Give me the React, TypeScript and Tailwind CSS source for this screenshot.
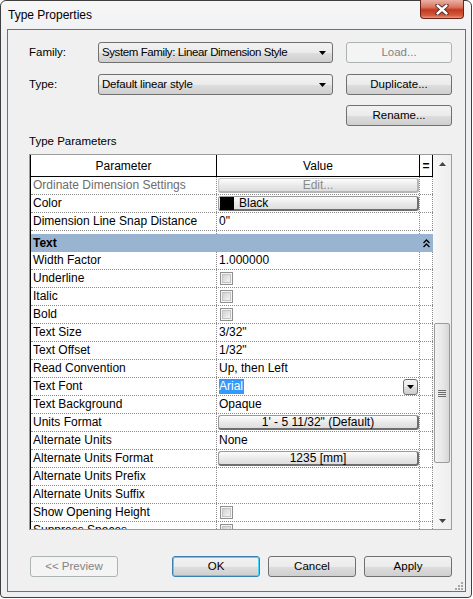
import React from "react";

const btnFace =
  "bg-[linear-gradient(#f2f2f2_0%,#ebebeb_50%,#dddddd_51%,#cfcfcf_100%)] border border-[#707070] rounded-[3px]";
const cellBtn =
  "h-[15px] w-[201px] ml-[1px] mt-[1px] rounded-[3px] border border-[#9a9a9a] border-b-2 border-r-2 border-b-[#6f6f6f] border-r-[#6f6f6f] bg-[linear-gradient(#fdfdfd,#e9e9e9_55%,#dedede)] flex items-center justify-center leading-none";
const dot = "border-dotted border-[#8a8a8a]";

function ComboArrow() {
  return (
    <svg width="7" height="4" viewBox="0 0 7 4">
      <path d="M0 0h7L3.5 4z" fill="#000" />
    </svg>
  );
}

function Checkbox() {
  return (
    <span className="block w-[13px] h-[13px] ml-[3px] mt-[2px] border border-[#8e8f8f] bg-[#f4f4f4] p-[1px]">
      <span className="block w-full h-full border border-[#c4c4c4] bg-[linear-gradient(135deg,#d2d2d2,#f5f5f5)]" />
    </span>
  );
}

function Row({
  label,
  children,
  dim,
}: {
  label: string;
  children?: React.ReactNode;
  dim?: boolean;
}) {
  return (
    <div className={`flex h-[18px] shrink-0 border-b ${dot}`}>
      <div
        className={`w-[186px] shrink-0 border-r ${dot} pl-[2px] leading-[17px] whitespace-nowrap overflow-hidden ${
          dim ? "text-[#6d6d6d]" : "text-black"
        }`}
      >
        {label}
      </div>
      <div className={`w-[203px] shrink-0 border-r ${dot} leading-[17px]`}>{children}</div>
      <div className={`w-[13px] shrink-0 border-r ${dot}`} />
    </div>
  );
}

function Val({ children }: { children: React.ReactNode }) {
  return <span className="pl-[2px] whitespace-nowrap">{children}</span>;
}

function DialogButton({
  label,
  disabled,
  primary,
  className = "",
}: {
  label: string;
  disabled?: boolean;
  primary?: boolean;
  className?: string;
}) {
  const look = disabled
    ? "border border-[#adb2b5] rounded-[3px] bg-[#f4f4f4] text-[#838383]"
    : primary
    ? "border border-[#3c7fb1] rounded-[3px] bg-[linear-gradient(#f2f2f2_0%,#ebebeb_50%,#dddddd_51%,#cfcfcf_100%)] shadow-[inset_0_0_0_1px_#48d7fb] text-black"
    : `${btnFace} text-black`;
  return (
    <div className={`h-[21px] flex items-center justify-center ${look} ${className}`}>{label}</div>
  );
}

export default function App() {
  return (
    <div className="w-[473px] h-[599px] bg-white font-['Liberation_Sans',Arial,sans-serif] text-[12px] text-black">
      <div className="w-[472px] h-[598px] border border-[#3f3f3f] rounded-t-[6px] rounded-b-[4px] bg-[linear-gradient(#f7f7f8,#eeeff1_40px,#eeeff1)] flex flex-col pl-[6px] pr-[5px] pb-[5px]">
        {/* Title bar */}
        <div className="h-[28px] shrink-0 flex items-start justify-between">
          <div className="pl-[1px] pt-[7px] leading-[14px] text-[12px]">Type Properties</div>
          <div className="w-[44px] h-[19px] -mt-px mr-[2px] border border-t-0 border-[#6b2417] rounded-b-[4px] bg-[linear-gradient(#eab1a4,#d9755f_40%,#c2391f_55%,#d3593d_85%,#e59a80)] flex items-center justify-center">
            <svg width="14" height="11" viewBox="0 0 14 11">
              <path d="M2.5 1.5l9 8M11.5 1.5l-9 8" stroke="#4a2019" strokeWidth="4.2" strokeLinecap="round" />
              <path d="M2.5 1.5l9 8M11.5 1.5l-9 8" stroke="#fff" strokeWidth="2.4" strokeLinecap="round" />
            </svg>
          </div>
        </div>

        {/* Client area */}
        <div className="flex-1 border border-[#707070] bg-[#f0f0f0] flex flex-col relative">
          <div className="flex items-center mt-[12px] pl-[21px] text-[11.5px]">
            <span className="w-[69px]">Family:</span>
            <div className={`w-[235px] h-[21px] ${btnFace} flex items-center justify-between pl-[3px] pr-[6px]`}>
              <span className="tracking-[-0.4px]">System Family: Linear Dimension Style</span>
              <ComboArrow />
            </div>
            <DialogButton label="Load..." disabled className="w-[106px] ml-[13px]" />
          </div>
          <div className="flex items-center mt-[11px] pl-[21px] text-[11.5px]">
            <span className="w-[69px]">Type:</span>
            <div className={`w-[235px] h-[21px] ${btnFace} flex items-center justify-between pl-[3px] pr-[6px]`}>
              <span className="tracking-[-0.2px]">Default linear style</span>
              <ComboArrow />
            </div>
            <DialogButton label="Duplicate..." className="w-[106px] ml-[13px]" />
          </div>
          <div className="flex mt-[10px] pl-[338px] text-[11.5px]">
            <DialogButton label="Rename..." className="w-[106px]" />
          </div>

          <div className="mt-[8px] pl-[21px] leading-[14px] text-[11.5px]">Type Parameters</div>

          {/* Parameter grid */}
          <div className="mt-[6px] ml-[21px] w-[423px] h-[376px] border border-[#9c9c9c] bg-white flex overflow-hidden">
            <div className="w-[403px] shrink-0 border-l border-black flex flex-col overflow-hidden">
              <div className="h-[22px] shrink-0 flex border-b border-black">
                <div className="w-[186px] border-r border-black flex items-center justify-center">Parameter</div>
                <div className="w-[203px] border-r border-black flex items-center justify-center">Value</div>
                <div className="w-[13px] border-r border-black flex items-center justify-center font-bold leading-none">=</div>
              </div>
              <Row label="Ordinate Dimension Settings" dim>
                <div className={`${cellBtn} border-[#c9c9c9] border-b-[#b5b5b5] border-r-[#b5b5b5] bg-[#f5f5f5] text-[#8a8a8a]`}>
                  Edit...
                </div>
              </Row>
              <Row label="Color">
                <div className={`${cellBtn} justify-start`}>
                  <span className="w-[14px] h-[13px] bg-black ml-[1px]" />
                  <span className="ml-[5px]">Black</span>
                </div>
              </Row>
              <Row label="Dimension Line Snap Distance">
                <Val>0"</Val>
              </Row>
              <div className="flex h-[3px] shrink-0">
                <div className={`w-[186px] border-r ${dot}`} />
                <div className={`w-[203px] border-r ${dot}`} />
              </div>
              <div className="h-[18px] shrink-0 bg-[#99b4d1] flex items-center justify-between pl-[2px] pr-[3px]">
                <span className="font-bold">Text</span>
                <svg width="7" height="9" viewBox="0 0 7 9">
                  <path d="M0.5 4L3.5 1l3 3M0.5 8l3-3 3 3" stroke="#000" strokeWidth="1.3" fill="none" />
                </svg>
              </div>
              <Row label="Width Factor">
                <Val>1.000000</Val>
              </Row>
              <Row label="Underline">
                <Checkbox />
              </Row>
              <Row label="Italic">
                <Checkbox />
              </Row>
              <Row label="Bold">
                <Checkbox />
              </Row>
              <Row label="Text Size">
                <Val>3/32"</Val>
              </Row>
              <Row label="Text Offset">
                <Val>1/32"</Val>
              </Row>
              <Row label="Read Convention">
                <Val>Up, then Left</Val>
              </Row>
              <Row label="Text Font">
                <div className="flex items-center h-[17px] pl-[2px] pr-[1px]">
                  <span className="bg-[#3399ff] text-white leading-[15px] pr-[1px]">Arial</span>
                  <div className={`ml-auto w-[15px] h-[16px] ${btnFace} rounded-[2px] flex items-center justify-center`}>
                    <ComboArrow />
                  </div>
                </div>
              </Row>
              <Row label="Text Background">
                <Val>Opaque</Val>
              </Row>
              <Row label="Units Format">
                <div className={cellBtn}>1' - 5 11/32" (Default)</div>
              </Row>
              <Row label="Alternate Units">
                <Val>None</Val>
              </Row>
              <Row label="Alternate Units Format">
                <div className={cellBtn}>1235 [mm]</div>
              </Row>
              <Row label="Alternate Units Prefix" />
              <Row label="Alternate Units Suffix" />
              <Row label="Show Opening Height">
                <Checkbox />
              </Row>
              <Row label="Suppress Spaces">
                <Checkbox />
              </Row>
            </div>

            {/* Scrollbar */}
            <div className="w-[18px] shrink-0 bg-[linear-gradient(90deg,#f7f7f7,#eeeeee)] flex flex-col items-center">
              <div className="h-[17px] shrink-0 flex items-center justify-center">
                <svg width="7" height="4" viewBox="0 0 7 4">
                  <path d="M0 4h7L3.5 0z" fill="#444" />
                </svg>
              </div>
              <div className="flex-1 w-full flex flex-col items-start">
                <div className="mt-[151px] ml-[1px] w-[16px] h-[140px] rounded-[2px] border border-[#9b9b9b] bg-[linear-gradient(90deg,#f3f3f3,#e6e6e6_60%,#d6d6d6)] flex items-center justify-center">
                  <svg width="8" height="8" viewBox="0 0 8 8">
                    <path d="M0 1.5h8M0 3.5h8M0 5.5h8M0 7.5h8" stroke="#6b6b6b" strokeWidth="1" />
                  </svg>
                </div>
              </div>
              <div className="h-[17px] shrink-0 flex items-center justify-center">
                <svg width="7" height="4" viewBox="0 0 7 4">
                  <path d="M0 0h7L3.5 4z" fill="#444" />
                </svg>
              </div>
            </div>
          </div>

          {/* Bottom buttons */}
          <div className="flex mt-[26px] pl-[22px] text-[11.5px]">
            <DialogButton label="<< Preview" disabled className="w-[88px]" />
            <DialogButton label="OK" primary className="w-[88px] ml-[54px]" />
            <DialogButton label="Cancel" className="w-[88px] ml-[8px]" />
            <DialogButton label="Apply" className="w-[88px] ml-[8px]" />
          </div>

          <div className="flex-1" />
          <div className="flex justify-end pr-[2px] pb-[1px]">
            <svg width="8" height="8" viewBox="0 0 8 8">
              <g fill="#a8a8a8">
                <rect x="6" y="0" width="2" height="2" />
                <rect x="3" y="3" width="2" height="2" />
                <rect x="6" y="3" width="2" height="2" />
                <rect x="0" y="6" width="2" height="2" />
                <rect x="3" y="6" width="2" height="2" />
                <rect x="6" y="6" width="2" height="2" />
              </g>
            </svg>
          </div>
        </div>
      </div>
    </div>
  );
}
